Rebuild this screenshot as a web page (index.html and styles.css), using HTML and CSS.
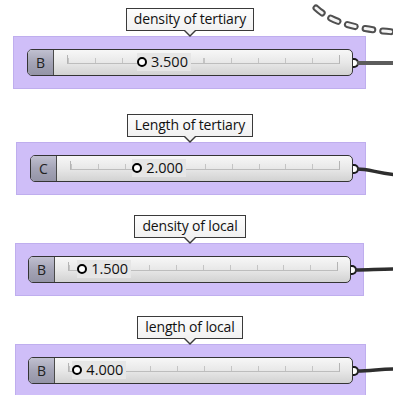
FILE: index.html
```html
<!DOCTYPE html>
<html lang="en">
<head>
<meta charset="UTF-8" />
<meta name="viewport" content="width=device-width, initial-scale=1" />
<title>Sliders</title>
<link rel="stylesheet" href="styles.css">
</head>
<body>

<div class="canvas">
  <svg class="chain" width="93" height="40" viewBox="0 0 93 40">
    <path class="chain-out" d="M16 8 C 28 19, 48 29, 96 32" />
    <path class="chain-in" d="M16 8 C 28 19, 48 29, 96 32" />
  </svg>

  <div class="slider s1">
    <div class="tipline"><span class="tip">density of tertiary</span></div>
    <div class="panel">
      <div class="bar">
        <div class="tag">B</div>
        <div class="rail">
          <div class="track">
            <div class="thumb" style="left: 27.3%"><span class="knob"></span><span class="value">3.500</span></div>
          </div>
        </div>
        <span class="port"></span>
        <svg class="wire" width="40" height="20" viewBox="0 0 40 20"><path class="wire-light" d="M0 10 L40 10" /></svg>
      </div>
    </div>
  </div>

  <div class="slider s2">
    <div class="tipline"><span class="tip">Length of tertiary</span></div>
    <div class="panel">
      <div class="bar">
        <div class="tag">C</div>
        <div class="rail">
          <div class="track">
            <div class="thumb" style="left: 24.7%"><span class="knob"></span><span class="value">2.000</span></div>
          </div>
        </div>
        <span class="port"></span>
        <svg class="wire" width="40" height="20" viewBox="0 0 40 20"><path d="M0 10 C 12 10, 20 14, 40 16" /></svg>
      </div>
    </div>
  </div>

  <div class="slider s3">
    <div class="tipline"><span class="tip">density of local</span></div>
    <div class="panel">
      <div class="bar">
        <div class="tag">B</div>
        <div class="rail">
          <div class="track">
            <div class="thumb" style="left: 4.9%"><span class="knob"></span><span class="value">1.500</span></div>
          </div>
        </div>
        <span class="port"></span>
        <svg class="wire" width="40" height="20" viewBox="0 0 40 20"><path d="M0 10 C 14 10, 24 9, 40 9" /></svg>
      </div>
    </div>
  </div>

  <div class="slider s4">
    <div class="tipline"><span class="tip">length of local</span></div>
    <div class="panel">
      <div class="bar">
        <div class="tag">B</div>
        <div class="rail">
          <div class="track">
            <div class="thumb" style="left: 3.1%"><span class="knob"></span><span class="value">4.000</span></div>
          </div>
        </div>
        <span class="port"></span>
        <svg class="wire" width="40" height="20" viewBox="0 0 40 20"><path d="M0 10 C 14 10, 24 8, 40 8" /></svg>
      </div>
    </div>
  </div>
</div>

</body>
</html>
```

FILE: styles.css
```css
html, body {
  margin: 0; padding: 0;
  width: 100%; height: 100%;
  overflow: hidden;
  background: #ffffff;
  font-family: 'Open Sans', 'Noto Sans', sans-serif;
  color: #111;
}
.canvas {
  position: relative;
  padding-top: 7px;
}
.chain {
  position: absolute;
  left: 300px; top: 0;
}
.chain path {
  fill: none;
  stroke-dasharray: 8 10;
  stroke-linecap: round;
}
.chain-out { stroke: #505050; stroke-width: 7; }
.chain-in { stroke: #f4f4f4; stroke-width: 3; }

.s2 { margin-top: 24px; }
.s3, .s4 { margin-top: 19px; }

.tipline {
  width: 380px;
  text-align: center;
  height: 22px;
}
.tip {
  position: relative;
  display: inline-block;
  box-sizing: border-box;
  height: 23px;
  line-height: 20px;
  padding: 0 7px;
  font-size: 14px;
  letter-spacing: -0.15px;
  background: linear-gradient(#fdfdfd, #f1f1f1);
  border: 1px solid #3a3a3a;
}
.tip::before, .tip::after {
  content: '';
  position: absolute;
  left: 50%;
  width: 0; height: 0;
  border-style: solid;
  border-color: transparent;
}
.tip::before {
  bottom: -7px;
  margin-left: -7px;
  border-width: 7px 7px 0 7px;
  border-top-color: #3a3a3a;
}
.tip::after {
  bottom: -5px;
  margin-left: -6px;
  border-width: 6px 6px 0 6px;
  border-top-color: #f1f1f1;
}

.panel {
  box-sizing: border-box;
  margin-top: 7px;
  height: 53px;
  padding: 12px 12px 12px 12px;
  background: #cfbef8;
  border: 1px solid #bfaeee;
}
.s1 .panel { margin-left: 13px; width: 353px; padding-left: 13px; }
.s2 .panel { margin-left: 16px; width: 350px; padding-left: 13px; }
.s3 .panel { margin-left: 15px; width: 349px; }
.s4 .panel { margin-left: 15px; width: 351px; }

.bar {
  position: relative;
  display: flex;
  box-sizing: border-box;
  height: 27px;
  border: 1px solid #343434;
  border-radius: 5px;
  background: linear-gradient(#f7f7f7, #e8e8e8 50%, #d2d2d2);
}
.tag {
  width: 25px;
  border-right: 1px solid #4a4a4a;
  border-radius: 4px 0 0 4px;
  background: linear-gradient(#c0c0d0, #a4a4b6 50%, #9494a6);
  text-align: center;
  font-size: 14px;
  line-height: 25px;
  color: #222;
}
.rail {
  flex: 1;
  padding: 0 12px 0 13px;
}
.track {
  position: relative;
  box-sizing: border-box;
  margin-top: 5px;
  height: 9px;
  border-left: 1px solid #b4b4b4;
  border-right: 1px solid #b4b4b4;
  border-bottom: 1px solid #bdbdbd;
  background: repeating-linear-gradient(90deg, #c4c4c4 0 1px, transparent 1px 10%) left bottom / 100% 5px no-repeat;
}
.thumb {
  position: absolute;
  top: 7px;
  display: flex;
  align-items: center;
  gap: 4px;
  padding-right: 3px;
  transform: translate(-5px, -50%);
  background: #e6e6e6;
}
.knob {
  box-sizing: border-box;
  width: 10px; height: 10px;
  border: 2.5px solid #000;
  border-radius: 50%;
  background: #fff;
}
.value {
  font-size: 14.5px;
  line-height: 18px;
  color: #111;
}
.port {
  position: absolute;
  right: -7px;
  top: 50%;
  box-sizing: border-box;
  width: 6px; height: 10px;
  margin-top: -5px;
  border: 2px solid #1a1a1a;
  border-left: none;
  border-radius: 0 6px 6px 0;
  background: #fff;
}
.wire {
  position: absolute;
  left: calc(100% + 5px);
  top: 50%;
  margin-top: -10px;
}
.wire path {
  fill: none;
  stroke: #2e2e2e;
  stroke-width: 3.5;
}
.wire .wire-light {
  stroke: #5c5c5c;
  stroke-width: 4;
}
```
